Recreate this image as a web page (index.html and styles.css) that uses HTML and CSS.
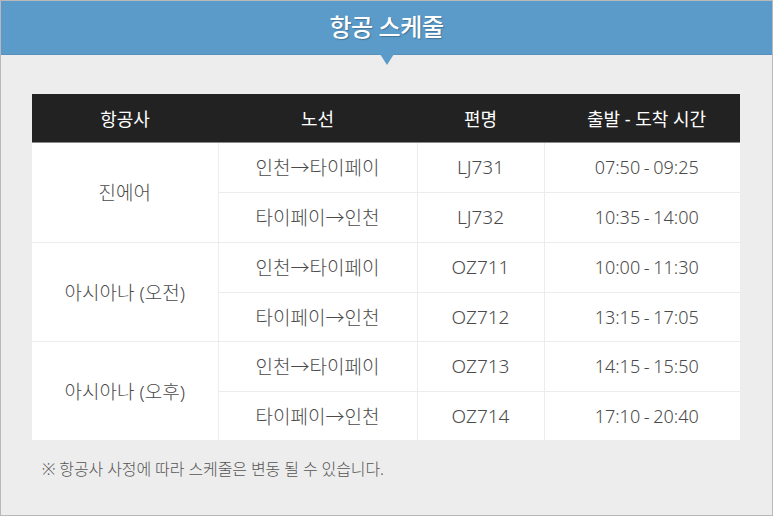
FILE: index.html
```html
<!DOCTYPE html>
<html lang="ko">
<head>
<meta charset="utf-8">
<link rel="stylesheet" href="styles.css">
</head>
<body>
<div class="frame">
  <div class="banner">
    <h1 class="title">항공 스케줄</h1>
    <span class="pointer"></span>
  </div>
  <div class="content">
    <table class="schedule">
      <colgroup>
        <col class="c1"><col class="c2"><col class="c3"><col class="c4">
      </colgroup>
      <thead>
        <tr><th>항공사</th><th>노선</th><th>편명</th><th class="time">출발 - 도착 시간</th></tr>
      </thead>
      <tbody>
        <tr><td rowspan="2">진에어</td><td>인천→타이페이</td><td>LJ731</td><td class="time">07:50 - 09:25</td></tr>
        <tr><td>타이페이→인천</td><td>LJ732</td><td class="time">10:35 - 14:00</td></tr>
        <tr><td rowspan="2">아시아나 (오전)</td><td>인천→타이페이</td><td>OZ711</td><td class="time">10:00 - 11:30</td></tr>
        <tr class="short"><td>타이페이→인천</td><td>OZ712</td><td class="time">13:15 - 17:05</td></tr>
        <tr><td rowspan="2">아시아나 (오후)</td><td>인천→타이페이</td><td>OZ713</td><td class="time">14:15 - 15:50</td></tr>
        <tr class="short"><td>타이페이→인천</td><td>OZ714</td><td class="time">17:10 - 20:40</td></tr>
      </tbody>
    </table>
    <p class="note">※ 항공사 사정에 따라 스케줄은 변동 될 수 있습니다.</p>
  </div>
</div>
</body>
</html>
```

FILE: styles.css
```css
* { box-sizing: border-box; }
html, body { margin: 0; padding: 0; }
body {
  width: 773px;
  height: 516px;
  font-family: "Noto Sans", "Noto Sans CJK KR", sans-serif;
  background: #ededed;
}
.frame {
  width: 773px;
  height: 516px;
  border: 1px solid #b9b9b9;
  background: #ededed;
  display: flex;
  flex-direction: column;
}
.banner {
  position: relative;
  height: 54px;
  background: #5b9bc9;
  border-bottom: 1px solid #5790bd;
  display: flex;
  align-items: center;
  justify-content: center;
}
.title {
  margin: 0;
  color: #fff;
  font-size: 24px;
  font-weight: 500;
  letter-spacing: -0.4px;
  text-shadow: 1px 1px 1px rgba(0,0,0,0.25);
  line-height: 1;
  padding-bottom: 2px;
}
.pointer {
  position: absolute;
  left: 379px;
  top: 53px;
  width: 0;
  height: 0;
  border-left: 7px solid transparent;
  border-right: 7px solid transparent;
  border-top: 11px solid #5b9bc9;
}
.content {
  padding: 39px 31px 0 31px;
}
.schedule {
  width: 708px;
  border-collapse: collapse;
  table-layout: fixed;
  background: #fff;
}
.c1 { width: 186px; }
.c2 { width: 199px; }
.c3 { width: 127px; }
.c4 { width: 196px; }
.schedule th {
  background: #222;
  color: #fff;
  font-weight: 400;
  font-size: 18px;
  height: 48px;
  padding: 0;
  border-bottom: 1px solid #8a8a8a;
}
.schedule td {
  height: 50px;
  padding: 0;
  text-align: center;
  font-size: 19px;
  font-weight: 300;
  color: #4a4a4a;
  border: 1px solid #ececec;
  border-top: 0;
}
.schedule th.time { padding-left: 9px; }
.schedule td.time { padding-left: 9px; font-size: 18px; word-spacing: -1px; }
.schedule tr.short td { height: 49px; }
.schedule tr td:first-child { border-left: 0; }
.schedule tr td:last-child { border-right: 0; }
.note {
  margin: 15px 0 0 10px;
  font-size: 16px;
  font-weight: 300;
  color: #555;
  letter-spacing: -0.1px;
}
```
